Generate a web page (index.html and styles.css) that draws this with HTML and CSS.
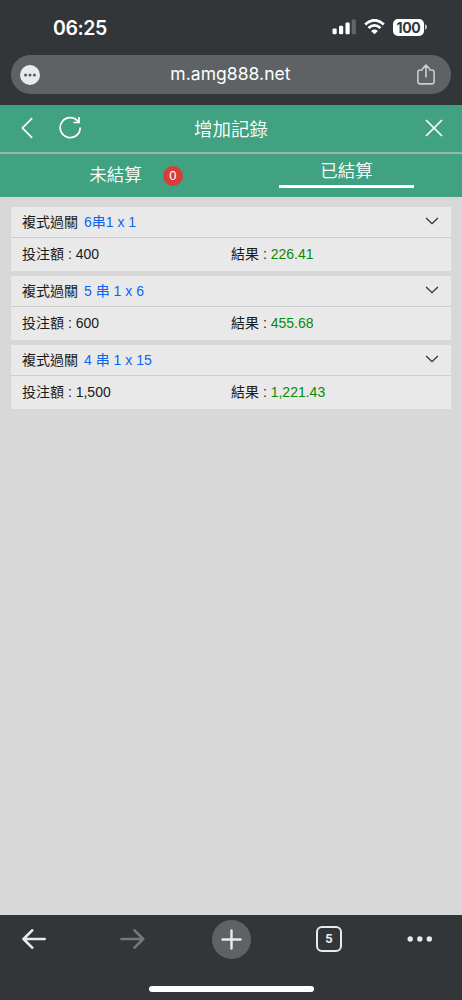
FILE: index.html
```html
<!DOCTYPE html>
<html lang="zh-Hant">
<head>
<meta charset="utf-8">
<meta name="viewport" content="width=device-width, initial-scale=1">
<title>增加記錄</title>
<link rel="stylesheet" href="styles.css">
</head>
<body>
<div class="phone">
  <header class="browser-top">
    <div class="status">
      <span class="clock">06:25</span>
      <div class="status-icons">
        <svg class="signal" width="24" height="16" viewBox="0 0 24 16" fill="#fff"><rect x="0.500" y="9.500" width="4.200" height="5.800" rx="1.200"/><rect x="7" y="6.800" width="4.200" height="8.500" rx="1.200"/><rect x="13.500" y="3.600" width="4.200" height="11.700" rx="1.200"/><rect x="19.700" y=".500" width="4.200" height="14.800" rx="1.200" fill="#636567"/></svg>
        <svg class="wifi" width="21" height="16" viewBox="0 0 21 16" fill="none" stroke="#fff" stroke-width="2.800"><path d="M1.200 5.500Q10.500-2.900 19.800 5.500"/><path d="M4.500 9Q10.500 3.700 16.500 9"/><path d="M10.500 15.300L7.100 11.900Q10.500 9 13.900 11.900Z" fill="#fff" stroke="none"/></svg>
        <span class="battery">100</span>
        <svg class="battery-tip" width="3" height="6" viewBox="0 0 3 6"><path d="M0 0Q2 1 2 3T0 6Z" fill="#c7c9ca"/></svg>
      </div>
    </div>
    <div class="address">
      <svg width="20" height="20" viewBox="0 0 20 20"><circle cx="10" cy="10" r="10" fill="#e8ebee"/><g fill="#5d6164"><circle cx="5.600" cy="10" r="1.600"/><circle cx="10" cy="10" r="1.600"/><circle cx="14.400" cy="10" r="1.600"/></g></svg>
      <span class="host">m.amg888.net</span>
      <svg width="18" height="21" viewBox="0 0 18 21" fill="none" stroke="#c9ccd0" stroke-width="1.600" stroke-linecap="round" stroke-linejoin="round"><path d="M5.500 6H3.200Q.900 6 .900 8.300V17.600Q.900 19.900 3.200 19.900H14.800Q17.100 19.900 17.100 17.600V8.300Q17.100 6 14.800 6H12.500M9 13V1.200M5.600 4.500L9 1.100L12.400 4.500"/></svg>
    </div>
  </header>

  <nav class="title-bar">
    <svg class="back" width="13" height="22" viewBox="0 0 13 22"><path d="M11.200 1.200L1.400 11L11.200 20.800"/></svg>
    <svg class="reload" width="23" height="23" viewBox="0 0 23 23"><path d="M21.200 11.500A10 10 0 1 1 19.600 6.200M20 1V6.500H14.500"/></svg>
    <h1 class="title">增加記錄</h1>
    <svg class="close" width="18" height="18" viewBox="0 0 18 18"><path d="M1 1L17 17M17 1L1 17"/></svg>
  </nav>

  <div class="tabs">
    <div class="tab"><span class="pending">未結算</span><span class="count">0</span></div>
    <div class="tab active"><span class="tab-label">已結算</span></div>
  </div>

  <main class="records">
    <article class="record">
      <div class="record-head"><span>複式過關</span><span class="bet">6串1 x 1</span><svg class="chevron" width="14" height="8" viewBox="0 0 14 8"><path d="M1.100 1L7 6.600L12.900 1"/></svg></div>
      <div class="record-body"><span>投注額 : 400</span><span>結果 : <b>226.41</b></span></div>
    </article>
    <article class="record">
      <div class="record-head"><span>複式過關</span><span class="bet">5 串 1 x 6</span><svg class="chevron" width="14" height="8" viewBox="0 0 14 8"><path d="M1.100 1L7 6.600L12.900 1"/></svg></div>
      <div class="record-body"><span>投注額 : 600</span><span>結果 : <b>455.68</b></span></div>
    </article>
    <article class="record">
      <div class="record-head"><span>複式過關</span><span class="bet">4 串 1 x 15</span><svg class="chevron" width="14" height="8" viewBox="0 0 14 8"><path d="M1.100 1L7 6.600L12.900 1"/></svg></div>
      <div class="record-body"><span>投注額 : 1,500</span><span>結果 : <b>1,221.43</b></span></div>
    </article>
  </main>

  <footer class="browser-bottom">
    <div class="toolbar">
      <svg class="arrow" width="24" height="20" viewBox="0 0 24 20"><path d="M22.700 10H1.500M10.200 1.300L1.500 10L10.200 18.700"/></svg>
      <svg class="arrow disabled" width="25" height="20" viewBox="0 0 25 20"><path d="M1.500 10H23.200M14.500 1.300L23.200 10L14.500 18.700"/></svg>
      <span class="new-tab"><svg width="21" height="21" viewBox="0 0 21 21" fill="none" stroke="#e8ebee" stroke-width="2.400" stroke-linecap="round"><path d="M1.500 10.500H19.500M10.500 1.500V19.500"/></svg></span>
      <span class="tab-count">5</span>
      <svg width="26" height="6" viewBox="0 0 26 6" fill="#e8ebee"><circle cx="3.200" cy="3" r="2.700"/><circle cx="12.800" cy="3" r="2.700"/><circle cx="22.300" cy="3" r="2.700"/></svg>
    </div>
    <div class="home-indicator"></div>
  </footer>
</div>
</body>
</html>
```

FILE: styles.css
```css
* { box-sizing: border-box; }
body { margin: 0; }
svg { display: block; flex: none; }

.phone {
  display: flex;
  flex-direction: column;
  width: 462px;
  height: 1000px;
  background: #d8d8d8;
  color: #1a1a1a;
  font: 14px/20px "Liberation Sans", "Noto Sans CJK TC", sans-serif;
}

.browser-top { height: 105px; background: #333638; color: #fff; }
.status { display: flex; justify-content: space-between; height: 55px; padding: 0 34px 0 53px; }
.clock { padding-top: 16px; font: 600 19.500px/24px Inter, sans-serif; letter-spacing: -.4px; }
.status-icons { display: flex; align-items: flex-start; padding-top: 19px; }
.wifi { margin-left: 8px; }
.battery {
  width: 31px;
  height: 17px;
  margin-left: 8px;
  border-radius: 5px;
  background: #fff;
  color: #333638;
  font: 700 14px/17px Inter, sans-serif;
  letter-spacing: -.3px;
  text-align: center;
}
.battery-tip { margin: 5px 0 0 1px; }

.address {
  display: flex;
  align-items: center;
  justify-content: space-between;
  height: 39px;
  margin: 0 11px;
  padding: 0 16px 0 9px;
  border-radius: 20px;
  background: #5e6265;
}
.host { padding: 0 0 2px 4px; font: 400 17.500px/24px Inter, sans-serif; letter-spacing: .05px; }

.title-bar {
  display: flex;
  align-items: center;
  height: 49px;
  padding: 0 19px 2px 21px;
  border-bottom: 2px solid #98b9aa;
  background: #41a281;
  color: #fff;
}
.title-bar svg { fill: none; stroke: #fff; stroke-width: 1.7; }
.reload { margin: 0 0 0 25px; }
.title {
  margin: 0 0 0 112px;
  font: 350 18.500px/24px "Noto Sans CJK TC", sans-serif;
}
.close { margin: 0 0 0 auto; }

.tabs { display: grid; grid-template-columns: 1fr 1fr; height: 43px; background: #41a281; color: #fff; font: 350 17.500px/24px "Noto Sans CJK TC", sans-serif; }
.tab { display: flex; align-items: center; justify-content: center; padding-left: 41px; }
.pending { padding-bottom: 4px; }
.tab.active { flex-direction: column; justify-content: flex-start; padding: 4px 0 0; }
.active .tab-label { width: 135px; height: 30px; border-bottom: 3px solid #fff; text-align: center; }
.count {
  width: 20px;
  height: 20px;
  margin-left: 21px;
  border-radius: 50%;
  background: #d93f38;
  font: 13px/20px "Liberation Sans", sans-serif;
  text-align: center;
}

.records { display: flex; flex: 1; flex-direction: column; gap: 5px; padding: 10px 11px; }
.record { height: 64px; background: #e9e9e9; }
.record-head { display: flex; align-items: center; height: 31px; padding: 0 12px 0 11px; border-bottom: 1px solid #cecece; }
.bet { margin-left: 6px; color: #0d63f3; }
.chevron { margin: -2px 0 0 auto; fill: none; stroke: #333; stroke-width: 1.3; }
.record-body { display: grid; grid-template-columns: 209px 1fr; align-items: center; height: 33px; padding: 0 0 1px 11px; }
.record-body b { color: #078b07; font-weight: 400; }

.browser-bottom { display: flex; flex-direction: column; height: 85px; background: #333638; }
.toolbar { display: grid; grid-template-columns: 68px 129px 68px 128px 53px; place-items: center; height: 48px; }
.arrow { fill: none; stroke: #e8ebee; stroke-width: 2.600; stroke-linecap: round; stroke-linejoin: round; }
.disabled { stroke: #757779; }
.new-tab { display: grid; place-items: center; width: 39px; height: 39px; border-radius: 50%; background: #5e6265; }
.tab-count { width: 26px; height: 26px; border: 2px solid #e8ebee; border-radius: 6px; color: #e8ebee; font: 700 13px/22px Roboto, sans-serif; text-align: center; }
.home-indicator { width: 165px; height: 6px; margin: 23px 0 0 149px; border-radius: 3px; background: #fff; }
```
